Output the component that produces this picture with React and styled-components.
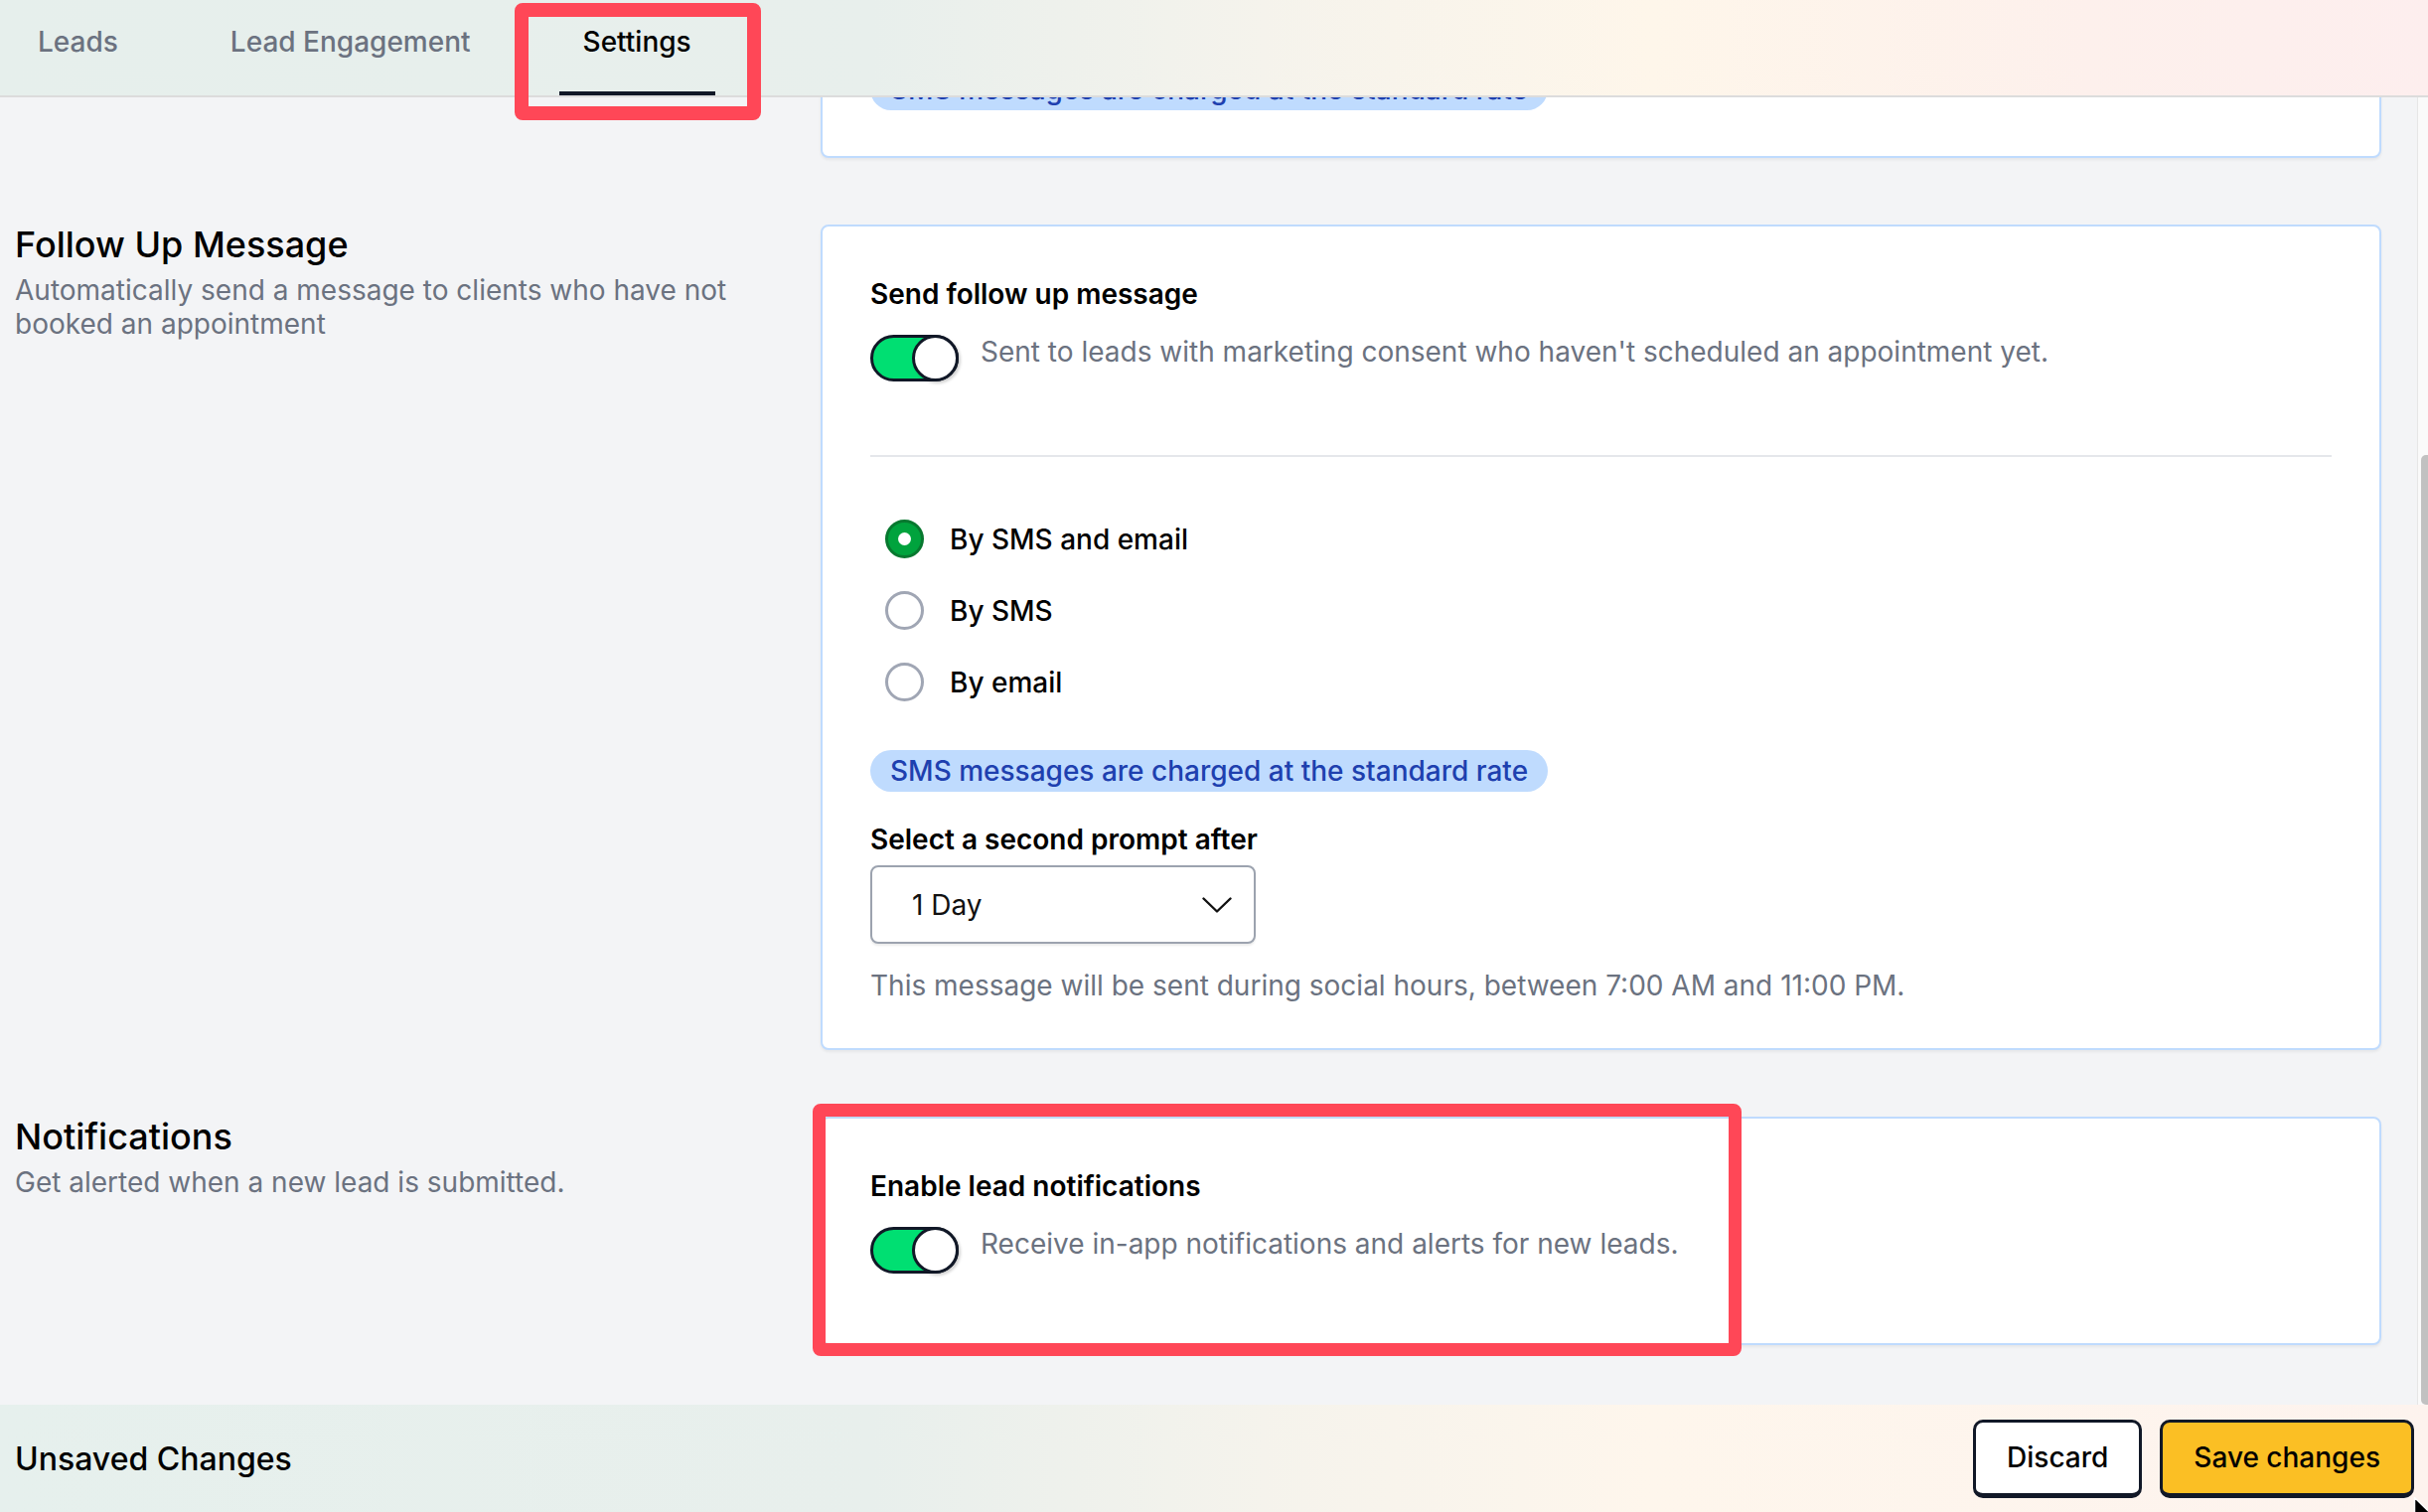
import React, { useLayoutEffect, useRef } from "react";
import styled, { createGlobalStyle } from "styled-components";

const GlobalStyle = createGlobalStyle`
  html, body { margin: 0; padding: 0; height: 100%; overflow: hidden; }
  body {
    font-family: Inter, "Noto Sans", "Liberation Sans", sans-serif;
    background: #f3f4f6;
    color: #111827;
    -webkit-font-smoothing: antialiased;
  }
  #root { height: 100%; }
  *, *::before, *::after { box-sizing: border-box; }
`;

const Page = styled.div`
  position: relative;
  display: flex;
  flex-direction: column;
  height: 100vh;
`;

const Header = styled.header`
  position: relative;
  z-index: 2;
  flex-shrink: 0;
  height: 98px;
  display: flex;
  gap: 65px;
  padding-left: 14px;
  border-bottom: 2px solid #dcdcdc;
  background: linear-gradient(90deg, #e6efec 0%, #e8efec 36%, #f5f3ec 52%, #fef6ea 68%, #fdf0ec 86%, #fdeeee 100%);
`;

const Tab = styled.div`
  position: relative;
  height: 96px;
  padding: 26px 24px 0;
  font-size: 28px;
  line-height: 1.2;
  font-weight: 500;
  color: ${(p) => (p.$active ? "#000" : "#6b7280")};
  border-bottom: 4px solid ${(p) => (p.$active ? "#111827" : "transparent")};
`;

const Highlight = styled.div`
  position: absolute;
  z-index: 3;
  pointer-events: none;
  border: ${(p) => p.$w || 14}px solid #ff4757;
  border-radius: 8px;
  left: ${(p) => p.$left}px;
  top: ${(p) => p.$top}px;
  width: ${(p) => p.$width}px;
  height: ${(p) => p.$height}px;
`;

const Main = styled.main`
  flex: 1;
  min-height: 0;
  display: flex;
`;

const Viewport = styled.div`
  flex: 1;
  min-width: 0;
  overflow-y: scroll;
  scrollbar-width: none;
  &::-webkit-scrollbar { display: none; }
`;

const ScrollTrack = styled.div`
  flex-shrink: 0;
  width: 11px;
  display: flex;
  padding: 360px 0 0 3px;
  background: #fafafa;
  border-left: 1px solid #e6e6e6;
`;

const ScrollThumb = styled.div`
  flex: 1;
  border-radius: 5px 0 0 5px;
  background: #c1c1c1;
`;

const Content = styled.div`
  display: flex;
  flex-direction: column;
  gap: 67px;
  padding: 38px 36px 60px 15px;
`;

const Section = styled.section`
  display: grid;
  grid-template-columns: 779px 1fr;
  column-gap: 32px;
  align-items: start;
`;

const SectionTitle = styled.h2`
  margin: -2px 0 0;
  font-size: 36px;
  line-height: 45px;
  font-weight: 500;
  color: #000;
`;

const SectionDesc = styled.p`
  margin: 6px 0 0;
  font-size: 28px;
  line-height: 34px;
  color: #6b7280;
`;

const Card = styled.div`
  position: relative;
  display: flex;
  flex-direction: column;
  background: #fff;
  border: 2px solid #bfdbfe;
  border-radius: 8px;
  padding: 51px 48px 46px;
  box-shadow: 0 2px 3px rgba(0, 0, 0, 0.06);
`;

const CardTitle = styled.div`
  font-size: 28px;
  line-height: 34px;
  font-weight: 600;
  color: #000;
`;

const ToggleRow = styled.div`
  display: flex;
  align-items: flex-start;
  gap: 22px;
  margin-top: 24px;
  padding-bottom: 24px;
`;

const ToggleTrack = styled.div`
  flex-shrink: 0;
  display: flex;
  justify-content: flex-end;
  width: 89px;
  height: 47px;
  border: 3px solid #111827;
  border-radius: 24px;
  background: #00df72;
`;

const ToggleKnob = styled.div`
  width: 47px;
  height: 47px;
  margin: -3px;
  border-radius: 50%;
  border: 3px solid #111827;
  background: #fff;
  box-shadow: 2px 2px 3px rgba(0, 0, 0, 0.18);
`;

const ToggleText = styled.div`
  font-size: 28px;
  line-height: 34px;
  color: #6b7280;
`;

const Divider = styled.hr`
  margin: 50px 0 0;
  border: 0;
  height: 2px;
  background: #e5e7eb;
`;

const RadioGroup = styled.div`
  display: flex;
  flex-direction: column;
  gap: 33px;
  padding-left: 15px;
  margin-top: ${(p) => p.$mt}px;
`;

const RadioRow = styled.label`
  display: flex;
  align-items: center;
  gap: 26px;
  height: 39px;
  font-size: 28px;
  font-weight: 500;
  color: #000;
`;

const RadioCircle = styled.span`
  flex-shrink: 0;
  display: flex;
  align-items: center;
  justify-content: center;
  width: 39px;
  height: 39px;
  border-radius: 50%;
  border: 3px solid ${(p) => (p.$checked ? "#08782f" : "#a0a6b4")};
  background: ${(p) => (p.$checked ? "#00a33d" : "#fff")};
  &::after {
    content: "";
    display: ${(p) => (p.$checked ? "block" : "none")};
    width: 13px;
    height: 13px;
    border-radius: 50%;
    background: #fff;
  }
`;

const Pill = styled.div`
  align-self: flex-start;
  display: flex;
  align-items: center;
  height: 42px;
  margin-top: 49px;
  padding: 0 20px;
  border-radius: 21px;
  background: #bfdbfe;
  color: #1e40af;
  font-size: 28px;
  font-weight: 500;
`;

const FieldLabel = styled.div`
  margin-top: 31px;
  font-size: 28px;
  line-height: 34px;
  font-weight: 600;
  color: #000;
`;

const Select = styled.div`
  margin-top: 9px;
  width: 388px;
  height: 79px;
  display: flex;
  align-items: center;
  justify-content: space-between;
  padding: 0 22px 0 40px;
  border: 2px solid #9ca3af;
  border-radius: 8px;
  background: #fff;
  box-shadow: 0 2px 2px rgba(0, 0, 0, 0.08);
  font-size: 28px;
  color: #111;
`;

const Hint = styled.div`
  margin-top: 25px;
  font-size: 28px;
  line-height: 34px;
  color: #6b7280;
`;

const Footer = styled.footer`
  position: relative;
  z-index: 2;
  flex-shrink: 0;
  height: 108px;
  display: flex;
  align-items: center;
  justify-content: space-between;
  padding: 0 14px 0 15px;
  background: linear-gradient(90deg, #e6f0ed 0%, #e8efec 36%, #f5f3ec 52%, #fef6ec 68%, #fdf3ee 100%);
`;

const FooterTitle = styled.div`
  font-size: 32px;
  font-weight: 500;
  color: #000;
`;

const ButtonBar = styled.div`
  display: flex;
  gap: 18px;
`;

const Button = styled.button`
  height: 79px;
  padding: 0 31px;
  border: 3px solid #111827;
  border-bottom-width: 5px;
  border-radius: 10px;
  background: ${(p) => (p.$primary ? "#fbbf24" : "#fff")};
  font-family: inherit;
  font-size: 28px;
  font-weight: 500;
  color: #000;
`;

const Cursor = styled.svg`
  position: absolute;
  left: calc(100% - 15px);
  top: 92px;
  pointer-events: none;
`;

const Toggle = () => (
  <ToggleTrack>
    <ToggleKnob />
  </ToggleTrack>
);

const Chevron = () => (
  <svg width="30" height="16" viewBox="0 0 30 16" fill="none">
    <polyline points="1.5,1.5 15,14.5 28.5,1.5" stroke="#111" strokeWidth="2.4" strokeLinecap="round" strokeLinejoin="round" />
  </svg>
);

const channelOptions = [
  { label: "By SMS and email", checked: true },
  { label: "By SMS", checked: false },
  { label: "By email", checked: false },
];

const Channels = ({ mt }) => (
  <RadioGroup $mt={mt}>
    {channelOptions.map((o) => (
      <RadioRow key={o.label}>
        <RadioCircle $checked={o.checked} />
        {o.label}
      </RadioRow>
    ))}
  </RadioGroup>
);

export default function App() {
  const viewRef = useRef(null);
  useLayoutEffect(() => {
    const el = viewRef.current;
    if (el) el.scrollTop = el.scrollHeight;
  }, []);

  return (
    <Page>
      <GlobalStyle />
      <Header>
        <Tab>Leads</Tab>
        <Tab>Lead Engagement</Tab>
        <Tab $active>
          Settings
          <Highlight $left={-45} $top={3} $width={248} $height={118} />
        </Tab>
      </Header>

      <Main>
        <Viewport ref={viewRef}>
          <Content>
            <Section>
              <div>
                <SectionTitle>Instant Reply</SectionTitle>
                <SectionDesc>Automatically reply to new leads as soon as they submit an enquiry</SectionDesc>
              </div>
              <Card>
                <CardTitle>Send instant reply</CardTitle>
                <ToggleRow>
                  <Toggle />
                  <ToggleText>Sent to leads immediately after they submit a lead form.</ToggleText>
                </ToggleRow>
                <Channels mt={16} />
                <Pill>SMS messages are charged at the standard rate</Pill>
              </Card>
            </Section>

            <Section>
              <div>
                <SectionTitle>Follow Up Message</SectionTitle>
                <SectionDesc>Automatically send a message to clients who have not booked an appointment</SectionDesc>
              </div>
              <Card>
                <CardTitle>Send follow up message</CardTitle>
                <ToggleRow>
                  <Toggle />
                  <ToggleText>Sent to leads with marketing consent who haven't scheduled an appointment yet.</ToggleText>
                </ToggleRow>
                <Divider />
                <Channels mt={63} />
                <Pill>SMS messages are charged at the standard rate</Pill>
                <FieldLabel>Select a second prompt after</FieldLabel>
                <Select>
                  <span>1 Day</span>
                  <Chevron />
                </Select>
                <Hint>This message will be sent during social hours, between 7:00 AM and 11:00 PM.</Hint>
              </Card>
            </Section>

            <Section>
              <div>
                <SectionTitle>Notifications</SectionTitle>
                <SectionDesc>Get alerted when a new lead is submitted.</SectionDesc>
              </div>
              <Card>
                <Highlight $left={-10} $top={-15} $width={935} $height={254} $w={13} />
                <CardTitle>Enable lead notifications</CardTitle>
                <ToggleRow>
                  <Toggle />
                  <ToggleText>Receive in-app notifications and alerts for new leads.</ToggleText>
                </ToggleRow>
              </Card>
            </Section>
          </Content>
        </Viewport>
        <ScrollTrack>
          <ScrollThumb />
        </ScrollTrack>
      </Main>

      <Footer>
        <FooterTitle>Unsaved Changes</FooterTitle>
        <ButtonBar>
          <Button>Discard</Button>
          <Button $primary>Save changes</Button>
        </ButtonBar>
        <Cursor width="20" height="30" viewBox="0 0 20 30">
          <path d="M1.5 1.5 L1.5 24 L7 18.5 L10.5 27 L14 25.5 L10.5 17.5 L18 17.5 Z" fill="#000" stroke="#fff" strokeWidth="1.5" strokeLinejoin="round" />
        </Cursor>
      </Footer>
    </Page>
  );
}
